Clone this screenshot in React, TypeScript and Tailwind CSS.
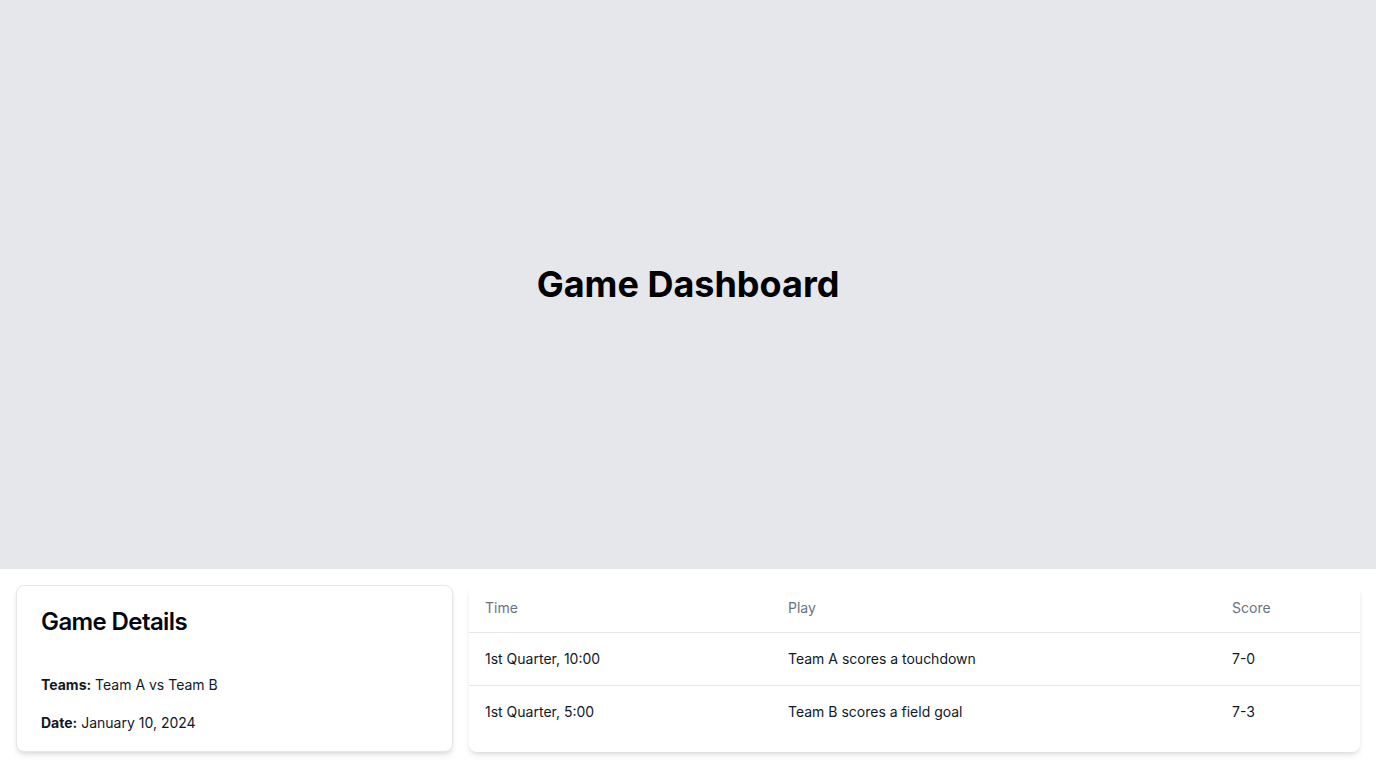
const PLAYS = [
  { time: "1st Quarter, 10:00", play: "Team A scores a touchdown", score: "7-0" },
  { time: "1st Quarter, 5:00", play: "Team B scores a field goal", score: "7-3" },
];

export default function App() {
  return (
    <div className="min-h-screen bg-white font-['Inter','Noto_Sans',sans-serif] text-gray-900">
      <header className="flex h-[569px] items-center justify-center bg-gray-200 pb-[2px]">
        <h1 className="text-4xl font-bold text-black">Game Dashboard</h1>
      </header>

      <main className="flex items-stretch gap-4 p-4">
        <section className="w-[437px] shrink-0 rounded-lg border border-gray-200 bg-white px-6 pt-5 pb-[18px] shadow-md">
          <h2 className="text-2xl font-semibold leading-8 tracking-tight text-gray-950">Game Details</h2>
          <div className="mt-[37px] space-y-[18px] text-sm">
            <p>
              <span className="font-bold">Teams:</span> Team A vs Team B
            </p>
            <p>
              <span className="font-bold">Date:</span> January 10, 2024
            </p>
          </div>
        </section>

        <section className="flex-1 rounded-lg bg-white shadow-md">
          <table className="w-full text-left text-sm">
            <thead>
              <tr className="border-b border-gray-200">
                <th className="w-[303px] px-4 pt-[13px] pb-[14px] font-normal text-gray-500">Time</th>
                <th className="w-[444px] px-4 pt-[13px] pb-[14px] font-normal text-gray-500">Play</th>
                <th className="px-4 pt-[13px] pb-[14px] font-normal text-gray-500">Score</th>
              </tr>
            </thead>
            <tbody className="divide-y divide-gray-200">
              {PLAYS.map((p) => (
                <tr key={p.time}>
                  <td className="p-4">{p.time}</td>
                  <td className="p-4">{p.play}</td>
                  <td className="p-4">{p.score}</td>
                </tr>
              ))}
            </tbody>
          </table>
        </section>
      </main>
    </div>
  );
}
